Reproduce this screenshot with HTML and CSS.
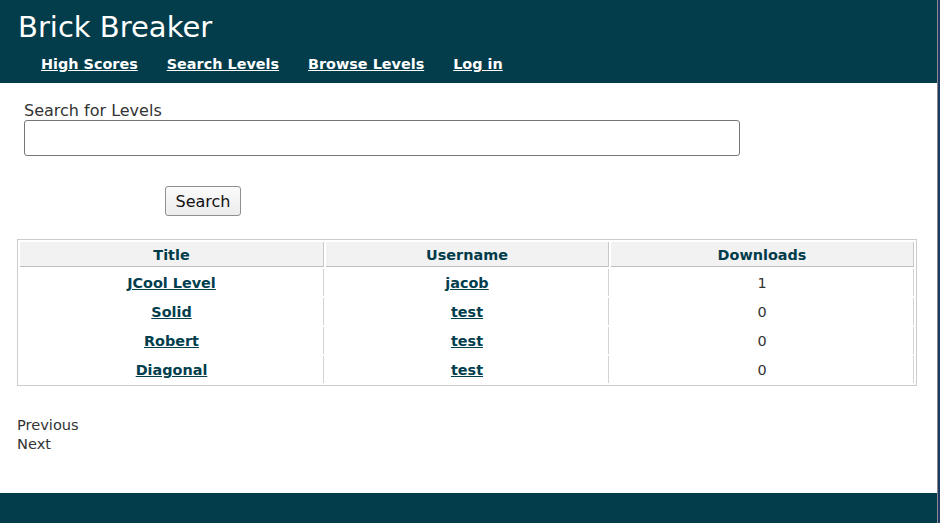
FILE: index.html
```html
<!DOCTYPE html>
<html lang="en">
<head>
<meta charset="utf-8">
<title>Brick Breaker</title>
<link rel="stylesheet" href="styles.css">
</head>
<body>
<header class="site-header">
  <h1 class="site-title">Brick Breaker</h1>
  <nav class="site-nav">
    <a href="#">High Scores</a>
    <a href="#">Search Levels</a>
    <a href="#">Browse Levels</a>
    <a href="#">Log in</a>
  </nav>
</header>
<main class="content">
  <form class="search-form">
    <label class="search-label" for="q">Search for Levels</label>
    <input class="search-input" id="q" type="text">
    <div class="button-row">
      <button class="search-button" type="button">Search</button>
    </div>
  </form>
  <table class="levels">
    <thead>
      <tr>
        <th class="col-title">Title</th>
        <th class="col-user">Username</th>
        <th class="col-downloads">Downloads</th>
      </tr>
    </thead>
    <tbody>
      <tr><td><a href="#">JCool Level</a></td><td><a href="#">jacob</a></td><td>1</td></tr>
      <tr><td><a href="#">Solid</a></td><td><a href="#">test</a></td><td>0</td></tr>
      <tr><td><a href="#">Robert</a></td><td><a href="#">test</a></td><td>0</td></tr>
      <tr><td><a href="#">Diagonal</a></td><td><a href="#">test</a></td><td>0</td></tr>
    </tbody>
  </table>
  <div class="pager">
    <div class="pager-item">Previous</div>
    <div class="pager-item">Next</div>
  </div>
</main>
<footer class="site-footer"></footer>
</body>
</html>
```
FILE: styles.css
```css
html {
  background: #1d3a66;
}
body {
  margin: 0 2px 0 0;
  border-right: 1px solid #8a8a8a;
  background: #ffffff;
  min-height: 100vh;
  font-family: "DejaVu Sans", Verdana, sans-serif;
  font-size: 14.4px;
  color: #333333;
}
.site-header {
  background: #033c4b;
  padding: 10px 0 10px 18px;
}
.site-title {
  margin: 0;
  font-size: 29px;
  line-height: 34px;
  font-weight: normal;
  color: #ffffff;
}
.site-nav {
  margin-top: 12px;
  padding-left: 23px;
  display: flex;
  gap: 29px;
  line-height: 17px;
}
.site-nav a {
  color: #ffffff;
  font-weight: bold;
  text-decoration: underline;
}
.content {
  padding: 0 0 0 17px;
}
.search-form {
  margin: 18px 0 0 0;
  padding-left: 7px;
}
.search-label {
  display: block;
  font-size: 16px;
  line-height: 19px;
  color: #333333;
}
.search-input {
  display: block;
  box-sizing: border-box;
  width: 716px;
  height: 36px;
  margin: 0;
  border: 1px solid #767676;
  border-radius: 3px;
  background: #ffffff;
  font-family: inherit;
  font-size: 16px;
}
.button-row {
  margin-top: 30px;
  padding-left: 141px;
}
.search-button {
  display: block;
  box-sizing: border-box;
  width: 76px;
  height: 30px;
  margin: 0;
  padding: 0;
  border: 1px solid #8f8f8f;
  border-radius: 3px;
  background: linear-gradient(#fbfbfb, #ececec);
  font-family: "DejaVu Sans", Verdana, sans-serif;
  font-size: 16px;
  color: #111111;
}
.levels {
  margin-top: 23px;
  width: 900px;
  table-layout: fixed;
  border: 1px solid #cccccc;
  border-spacing: 2px;
}
.levels th,
.levels td {
  box-sizing: border-box;
  text-align: center;
  vertical-align: middle;
}
.col-title { width: 304px; }
.col-user { width: 283px; }
.col-downloads { width: 303px; }
.levels th {
  height: 25px;
  padding: 4px 4px 2px;
  line-height: 18px;
  background: #f2f2f2;
  border-bottom: 1px solid #bdbdbd;
  border-right: 1px solid #c8c8c8;
  color: #003b4a;
  font-weight: bold;
}
.levels td {
  height: 27px;
  padding: 6px 4px 4px;
  line-height: 17px;
  border-right: 1px solid #d3d3d3;
  color: #333333;
}
.levels td a {
  color: #023e4d;
  font-weight: bold;
  text-decoration: underline;
}
.pager {
  margin-top: 29px;
  line-height: 19px;
  font-size: 14.6px;
}
.site-footer {
  margin-top: 40px;
  height: 30px;
  background: #033c4b;
}
```
